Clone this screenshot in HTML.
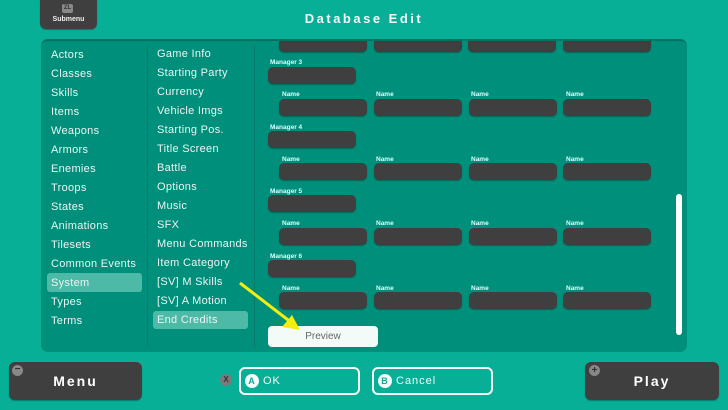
<!DOCTYPE html>
<html><head><style>
*{margin:0;padding:0;box-sizing:border-box}
body{width:728px;height:410px;background:#08af97;font-family:"Liberation Sans","DejaVu Sans",sans-serif;position:relative;overflow:hidden;color:#eef}
.a{position:absolute}
.dk{background:#3f3f3f;border-radius:5px;box-shadow:0 1px 1px rgba(0,0,0,.3)}
.t{position:absolute;font-size:11px;color:#eaf6f3;letter-spacing:.3px}
.sm{position:absolute;font-size:6.5px;font-weight:bold;color:#dff}
.btn{position:absolute;border:2px solid #f4fbfa;border-radius:6px;color:#f4fbfa;font-size:11px;letter-spacing:1px}
.circ{display:inline-block;width:14px;height:14px;border-radius:50%;background:#f4fbfa;color:#1a9;font-size:9px;font-weight:bold;text-align:center;line-height:14px;vertical-align:middle;margin-right:4px}
</style></head><body>
<div class="a dk" style="left:40px;top:-5px;width:57px;height:34px;border-radius:6px"></div>
<div class="a" style="left:62px;top:4px;width:11px;height:9px;background:#888;border-radius:2px;font-size:6px;color:#333;text-align:center;line-height:9px;font-weight:bold">ZL</div>
<div class="a" style="left:40px;top:16px;width:57px;text-align:center;font-size:7px;color:#eee;font-weight:bold">Submenu</div>
<div class="a" style="left:0;width:728px;top:11px;text-align:center;font-size:13px;font-weight:bold;letter-spacing:2.5px;color:#f2fbfa">Database Edit</div>
<div class="a" style="left:41px;top:39px;width:646px;height:313px;background:#008f7b;border-radius:7px;border-top:2px solid #056f60"></div>
<div class="a" style="left:147px;top:46px;width:1px;height:302px;background:#0b7b6b"></div>
<div class="a" style="left:254px;top:46px;width:1px;height:302px;background:#0b7b6b"></div>
<div class="a" style="left:47px;top:273px;width:95px;height:19px;background:#4db9a7;border-radius:3px"></div>
<div class="a" style="left:153px;top:311px;width:95px;height:18px;background:#4db9a7;border-radius:3px"></div>
<div class="t" style="left:51px;top:46px;line-height:19px">Actors<br>Classes<br>Skills<br>Items<br>Weapons<br>Armors<br>Enemies<br>Troops<br>States<br>Animations<br>Tilesets<br>Common Events<br>System<br>Types<br>Terms</div>
<div class="t" style="left:157px;top:45px;line-height:19px">Game Info<br>Starting Party<br>Currency<br>Vehicle Imgs<br>Starting Pos.<br>Title Screen<br>Battle<br>Options<br>Music<br>SFX<br>Menu Commands<br>Item Category<br>[SV] M Skills<br>[SV] A Motion<br>End Credits</div>
<div class="a" style="left:255px;top:41px;width:420px;height:310px;overflow:hidden">
<div class="a dk" style="left:24px;top:-5px;width:88px;height:16px"></div><div class="a dk" style="left:119px;top:-5px;width:88px;height:16px"></div><div class="a dk" style="left:213px;top:-5px;width:88px;height:16px"></div><div class="a dk" style="left:308px;top:-5px;width:88px;height:16px"></div>
</div>
<div class="sm" style="left:270px;top:59px">Manager 3</div><div class="a dk" style="left:268px;top:67px;width:88px;height:17px"></div>
<div class="sm" style="left:282px;top:91px">Name</div><div class="sm" style="left:376px;top:91px">Name</div><div class="sm" style="left:471px;top:91px">Name</div><div class="sm" style="left:566px;top:91px">Name</div>
<div class="a dk" style="left:279px;top:99px;width:88px;height:17px"></div><div class="a dk" style="left:374px;top:99px;width:88px;height:17px"></div><div class="a dk" style="left:469px;top:99px;width:88px;height:17px"></div><div class="a dk" style="left:563px;top:99px;width:88px;height:17px"></div>
<div class="sm" style="left:270px;top:124px">Manager 4</div><div class="a dk" style="left:268px;top:131px;width:88px;height:17px"></div>
<div class="sm" style="left:282px;top:156px">Name</div><div class="sm" style="left:376px;top:156px">Name</div><div class="sm" style="left:471px;top:156px">Name</div><div class="sm" style="left:566px;top:156px">Name</div>
<div class="a dk" style="left:279px;top:163px;width:88px;height:17px"></div><div class="a dk" style="left:374px;top:163px;width:88px;height:17px"></div><div class="a dk" style="left:469px;top:163px;width:88px;height:17px"></div><div class="a dk" style="left:563px;top:163px;width:88px;height:17px"></div>
<div class="sm" style="left:270px;top:188px">Manager 5</div><div class="a dk" style="left:268px;top:195px;width:88px;height:17px"></div>
<div class="sm" style="left:282px;top:220px">Name</div><div class="sm" style="left:376px;top:220px">Name</div><div class="sm" style="left:471px;top:220px">Name</div><div class="sm" style="left:566px;top:220px">Name</div>
<div class="a dk" style="left:279px;top:228px;width:88px;height:17px"></div><div class="a dk" style="left:374px;top:228px;width:88px;height:17px"></div><div class="a dk" style="left:469px;top:228px;width:88px;height:17px"></div><div class="a dk" style="left:563px;top:228px;width:88px;height:17px"></div>
<div class="sm" style="left:270px;top:253px">Manager 6</div><div class="a dk" style="left:268px;top:260px;width:88px;height:17px"></div>
<div class="sm" style="left:282px;top:285px">Name</div><div class="sm" style="left:376px;top:285px">Name</div><div class="sm" style="left:471px;top:285px">Name</div><div class="sm" style="left:566px;top:285px">Name</div>
<div class="a dk" style="left:279px;top:292px;width:88px;height:17px"></div><div class="a dk" style="left:374px;top:292px;width:88px;height:17px"></div><div class="a dk" style="left:469px;top:292px;width:88px;height:17px"></div><div class="a dk" style="left:563px;top:292px;width:88px;height:17px"></div>
<div class="a" style="left:268px;top:326px;width:110px;height:21px;background:#f3fbf9;border-radius:4px;color:#666;font-size:10px;text-align:center;line-height:21px">Preview</div>
<div class="a" style="left:676px;top:194px;width:6px;height:141px;background:#fff;border-radius:3px"></div>
<svg class="a" style="left:230px;top:275px" width="80" height="62"><line x1="10" y1="8" x2="62" y2="48" stroke="#f2ee10" stroke-width="3"/><polygon points="70,55 52,52 62,40" fill="#f2ee10"/></svg>
<div class="a dk" style="left:9px;top:362px;width:133px;height:38px;border-radius:6px;text-align:center;line-height:38px;font-size:14px;font-weight:bold;letter-spacing:2px;color:#fff">Menu</div>
<div class="a" style="left:12px;top:365px;width:11px;height:11px;border-radius:50%;background:#888;color:#333;font-size:10px;line-height:10px;text-align:center;font-weight:bold">−</div>
<div class="a dk" style="left:585px;top:362px;width:134px;height:38px;border-radius:6px;text-align:center;line-height:38px;font-size:14px;font-weight:bold;letter-spacing:2px;color:#fff">Play</div>
<div class="a" style="left:589px;top:365px;width:11px;height:11px;border-radius:50%;background:#888;color:#333;font-size:10px;line-height:11px;text-align:center;font-weight:bold">+</div>
<div class="a" style="left:220px;top:374px;width:12px;height:12px;border-radius:50%;background:#7a7a7a;color:#333;font-size:8px;line-height:12px;text-align:center;font-weight:bold">X</div>
<div class="btn" style="left:239px;top:367px;width:121px;height:28px;padding:5px 0 0 4px"><span class="circ">A</span>OK</div>
<div class="btn" style="left:372px;top:367px;width:121px;height:28px;padding:5px 0 0 4px"><span class="circ">B</span>Cancel</div>
</body></html>
